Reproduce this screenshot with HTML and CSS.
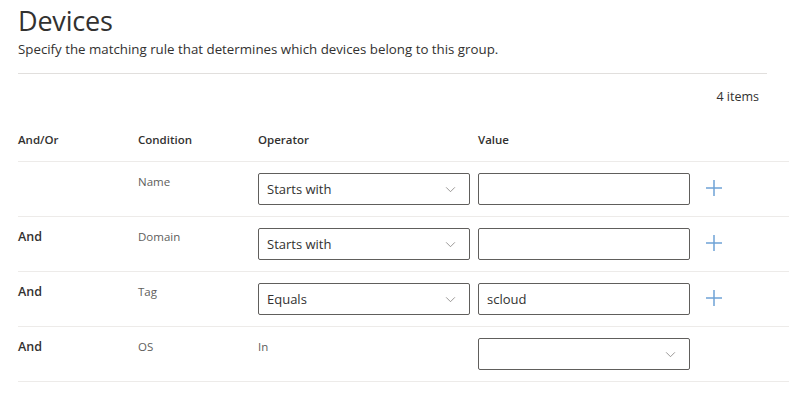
FILE: index.html
```html
<!DOCTYPE html>
<html lang="en">
<head>
    <meta charset="UTF-8">
    <meta name="viewport" content="width=device-width, initial-scale=1.0">
    <title>Devices</title>
    <link rel="stylesheet" href="styles.css">
</head>
<body>
    <header class="page-header">
        <h1>Devices</h1>
        <p class="subtitle">Specify the matching rule that determines which devices belong to this group.</p>
    </header>

    <main class="rules">
        <div class="item-count">4 items</div>

        <div class="rule-row head">
            <div>And/Or</div>
            <div>Condition</div>
            <div>Operator</div>
            <div>Value</div>
            <div></div>
        </div>

        <div class="rule-row">
            <div class="andor"></div>
            <div class="condition">Name</div>
            <div class="field select"><span>Starts with</span><svg class="chevron" viewBox="0 0 12 8"><path d="M1 1.5 L6 6.5 L11 1.5"/></svg></div>
            <div class="field"></div>
            <button class="add" type="button"><svg viewBox="0 0 16 16"><path d="M8 0 V16 M0 8 H16"/></svg></button>
        </div>

        <div class="rule-row">
            <div class="andor">And</div>
            <div class="condition">Domain</div>
            <div class="field select"><span>Starts with</span><svg class="chevron" viewBox="0 0 12 8"><path d="M1 1.5 L6 6.5 L11 1.5"/></svg></div>
            <div class="field"></div>
            <button class="add" type="button"><svg viewBox="0 0 16 16"><path d="M8 0 V16 M0 8 H16"/></svg></button>
        </div>

        <div class="rule-row">
            <div class="andor">And</div>
            <div class="condition">Tag</div>
            <div class="field select"><span>Equals</span><svg class="chevron" viewBox="0 0 12 8"><path d="M1 1.5 L6 6.5 L11 1.5"/></svg></div>
            <div class="field"><span>scloud</span></div>
            <button class="add" type="button"><svg viewBox="0 0 16 16"><path d="M8 0 V16 M0 8 H16"/></svg></button>
        </div>

        <div class="rule-row">
            <div class="andor">And</div>
            <div class="condition">OS</div>
            <div class="condition">In</div>
            <div class="field select"><span></span><svg class="chevron" viewBox="0 0 12 8"><path d="M1 1.5 L6 6.5 L11 1.5"/></svg></div>
            <div></div>
        </div>
    </main>
</body>
</html>
```

FILE: styles.css
```css
body {
    margin: 0;
    font-family: "Open Sans", "Noto Sans", Arial, sans-serif;
    color: #323130;
    background-color: white;
}

.page-header {
    margin: 0 22px 0 18px;
    padding-top: 3px;
    padding-bottom: 14px;
    border-bottom: 1px solid #e1dfdd;
}

.page-header h1 {
    margin: 0;
    font-size: 27px;
    font-weight: 400;
    line-height: 36px;
    letter-spacing: -0.2px;
}

.subtitle {
    margin: 0;
    font-size: 13.3px;
    line-height: 20px;
}

.rules {
    margin-left: 18px;
}

.item-count {
    margin-right: 30px;
    padding-top: 13px;
    text-align: right;
    font-size: 12.5px;
    line-height: 20px;
}

.rule-row {
    box-sizing: border-box;
    display: grid;
    grid-template-columns: 120px 120px 220px 220px 1fr;
    align-items: start;
    height: 55px;
    border-bottom: 1px solid #edebe9;
}

.rule-row.head {
    height: 53px;
    margin-top: 2px;
    padding-top: 23px;
    font-size: 11.5px;
    font-weight: 600;
    line-height: 16px;
}

.andor {
    padding-top: 12px;
    font-size: 12.5px;
    font-weight: 600;
    line-height: 16px;
}

.condition {
    padding-top: 12px;
    font-size: 11.5px;
    line-height: 16px;
    color: #605e5c;
}

.field {
    box-sizing: border-box;
    width: 212px;
    height: 32px;
    margin-top: 11px;
    display: flex;
    align-items: center;
    padding: 0 8px;
    border: 1px solid #605e5c;
    border-radius: 2px;
    font-size: 13px;
}

.field span {
    flex: 1;
}

.chevron {
    width: 11px;
    height: 7px;
    margin-right: 5px;
    fill: none;
    stroke: #8a8886;
    stroke-width: 1;
}

.add {
    margin-top: 18px;
    margin-left: 8px;
    width: 16px;
    height: 16px;
    padding: 0;
    border: none;
    background: none;
    cursor: pointer;
}

.add svg {
    display: block;
    width: 16px;
    height: 16px;
    fill: none;
    stroke: #6fa3d6;
    stroke-width: 1.5;
}
```
